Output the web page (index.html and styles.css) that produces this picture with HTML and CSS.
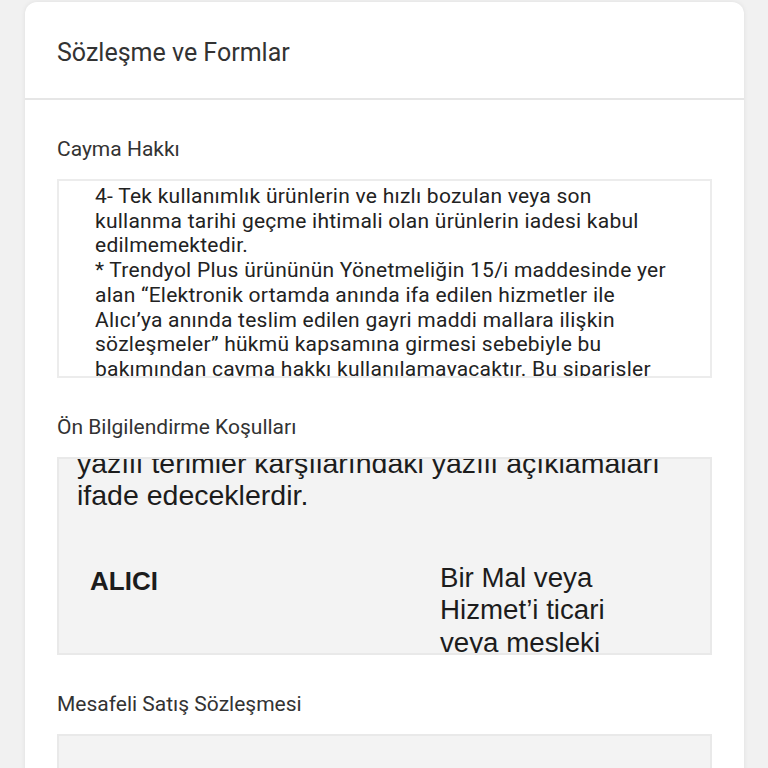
FILE: index.html
```html
<!DOCTYPE html>
<html lang="tr">
<head>
<meta charset="utf-8">
<title>Sözleşme ve Formlar</title>
<link rel="stylesheet" href="styles.css">
</head>
<body>
<div class="card">
  <div class="card-header">Sözleşme ve Formlar</div>
  <div class="card-body">
    <section class="form-section">
      <h3 class="form-title">Cayma Hakkı</h3>
      <div class="doc doc-white">
        <div class="doc-text">
          <p>4- Tek kullanımlık ürünlerin ve hızlı bozulan veya son kullanma tarihi geçme ihtimali olan ürünlerin iadesi kabul edilmemektedir.</p>
          <p>* Trendyol Plus ürününün Yönetmeliğin 15/i maddesinde yer alan “Elektronik ortamda anında ifa edilen hizmetler ile Alıcı’ya anında teslim edilen gayri maddi mallara ilişkin sözleşmeler” hükmü kapsamına girmesi sebebiyle bu bakımından cayma hakkı kullanılamayacaktır. Bu siparişler</p>
        </div>
      </div>
    </section>
    <section class="form-section">
      <h3 class="form-title">Ön Bilgilendirme Koşulları</h3>
      <div class="doc doc-grey">
        <div class="doc-large">
          <p class="intro">yazılı terimler karşılarındaki yazılı açıklamaları ifade edeceklerdir.</p>
          <div class="term-row">
            <div class="term">ALICI</div>
            <div class="term-def">Bir Mal veya Hizmet’i ticari veya mesleki olmayan amaçlarla edinen, kullanan veya yararlanan gerçek kişi</div>
          </div>
        </div>
      </div>
    </section>
    <section class="form-section">
      <h3 class="form-title">Mesafeli Satış Sözleşmesi</h3>
      <div class="doc doc-grey doc-last"></div>
    </section>
  </div>
</div>
</body>
</html>
```
FILE: styles.css
```css
html, body {
  margin: 0;
  padding: 0;
}
body {
  background: #f1f1f1;
  font-family: Roboto, "Noto Sans", "Liberation Sans", sans-serif;
  color: #222;
  height: 768px;
  overflow: hidden;
}
.card {
  margin: 2px 24px 0 25px;
  background: #fff;
  border-radius: 12px 12px 0 0;
  box-shadow: 0 0 5px rgba(0, 0, 0, 0.08);
  min-height: 800px;
}
.card-header {
  height: 98px;
  box-sizing: border-box;
  padding: 35.5px 0 0 32px;
  font-size: 25px;
  line-height: 30px;
  color: #333;
  border-bottom: 2px solid #e6e6e6;
}
.card-body {
  padding: 36px 32px 0 32px;
}
.form-section {
  margin-bottom: 36px;
}
.form-title {
  margin: 0 0 17px 0;
  font-size: 21px;
  font-weight: 400;
  line-height: 26px;
  color: #333;
}
.doc {
  height: 199px;
  box-sizing: border-box;
  border: 2px solid #ececec;
  overflow: hidden;
}
.doc-white {
  background: #fff;
}
.doc-grey {
  height: 198px;
  background: #f3f3f3;
  border-color: #e9e9e9;
}
.doc-text {
  padding: 3px 34px 0 36px;
  font-size: 21px;
  letter-spacing: 0.25px;
  line-height: 24.7px;
  color: #222;
}
.doc-text p {
  margin: 0;
}
.doc-large {
  margin-top: -12px;
  padding: 0 20px 0 18px;
  font-family: "Liberation Sans", Arial, sans-serif;
  font-size: 28.5px;
  line-height: 32px;
  color: #1c1c1c;
}
.doc-large .intro {
  margin: 0 0 51px 0;
}
.term-row {
  display: flex;
}
.term {
  width: 363px;
  padding: 3px 0 0 13px;
  box-sizing: border-box;
  font-weight: 700;
  font-size: 26px;
  flex-shrink: 0;
}
.term-def {
  width: 200px;
  font-size: 27.7px;
  line-height: 32.3px;
}
.doc-last {
  height: 60px;
}
```
